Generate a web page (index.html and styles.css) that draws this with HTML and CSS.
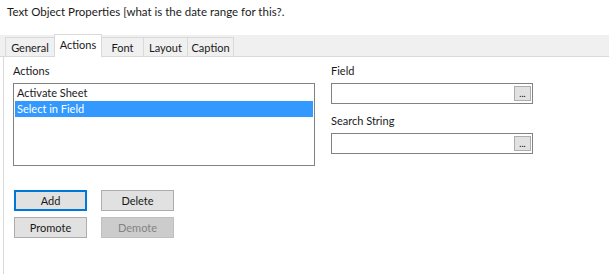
FILE: index.html
```html
<!DOCTYPE html>
<html>
<head>
<meta charset="utf-8">
<link rel="stylesheet" href="styles.css">
</head>
<body>
<div class="title">Text Object Properties [what is the date range for this?.</div>
<div class="tabstrip">
  <div class="tab t-general">General</div>
  <div class="tab t-actions active">Actions</div>
  <div class="tab t-font">Font</div>
  <div class="tab t-layout">Layout</div>
  <div class="tab t-caption">Caption</div>
</div>
<div class="panel">
  <div class="cols">
    <div class="left">
      <div class="label">Actions</div>
      <div class="listbox">
        <div class="item">Activate Sheet</div>
        <div class="item selected">Select in Field</div>
      </div>
    </div>
    <div class="right">
      <div class="label">Field</div>
      <div class="input"><span class="dots">...</span></div>
      <div class="label label2">Search String</div>
      <div class="input"><span class="dots">...</span></div>
    </div>
  </div>
  <div class="buttons">
    <div class="btnrow">
      <div class="btn focus">Add</div>
      <div class="btn">Delete</div>
    </div>
    <div class="btnrow">
      <div class="btn">Promote</div>
      <div class="btn disabled">Demote</div>
    </div>
  </div>
</div>
</body>
</html>
```
FILE: styles.css
```css
html, body {
  margin: 0;
  padding: 0;
  background: #ffffff;
  width: 609px;
  height: 274px;
  overflow: hidden;
  font-family: Lato, "Liberation Sans", sans-serif;
  font-size: 11px;
  color: #1a1a1a;
}
.title {
  height: 35px;
  box-sizing: border-box;
  padding: 4px 0 0 7px;
  font-size: 11.5px;
  line-height: 16px;
}
.tabstrip {
  height: 22px;
  background: #f0f0f0;
  display: flex;
  align-items: flex-end;
  padding-left: 5px;
  box-sizing: border-box;
  border-bottom: 1px solid #d9d9d9;
}
.tab {
  height: 19px;
  box-sizing: border-box;
  border: 1px solid #d9d9d9;
  border-bottom: none;
  margin-right: -1px;
  padding-top: 1px;
  line-height: 17px;
  text-align: center;
  background: #f0f0f0;
}
.t-general { width: 50px; }
.t-actions { width: 48px; }
.t-font { width: 43px; }
.t-layout { width: 45px; }
.t-caption { width: 47px; }
.tab.active {
  height: 23px;
  margin-bottom: -1px;
  background: #fff;
  padding-top: 0;
  line-height: 19px;
  position: relative;
}
.panel {
  margin-left: 3px;
  border-left: 1px solid #d9d9d9;
  height: 217px;
  box-sizing: border-box;
  padding: 6px 0 0 9px;
}
.cols {
  display: flex;
  gap: 16px;
}
.left {
  width: 302px;
}
.right {
  width: 202px;
}
.label {
  height: 20px;
  line-height: 15px;
}
.label2 {
  margin-top: 9px;
}
.listbox {
  height: 83px;
  box-sizing: border-box;
  border: 1px solid #828282;
  padding: 1px;
}
.item {
  height: 16px;
  line-height: 16px;
  padding-left: 2px;
}
.item.selected {
  background: #3399ff;
  color: #fff;
}
.input {
  height: 21px;
  box-sizing: border-box;
  border: 1px solid #828282;
  display: flex;
  justify-content: flex-end;
  align-items: center;
  padding-right: 1px;
}
.dots {
  width: 17px;
  height: 15px;
  box-sizing: border-box;
  background: #e1e1e1;
  border: 1px solid #adadad;
  font-size: 9px;
  line-height: 13px;
  text-align: center;
  color: #000;
}
.buttons {
  margin-top: 24px;
  margin-left: 1px;
  display: flex;
  flex-direction: column;
  gap: 6px;
}
.btnrow {
  display: flex;
  gap: 14px;
}
.btn {
  width: 73px;
  height: 21px;
  box-sizing: border-box;
  border: 1px solid #adadad;
  background: #e1e1e1;
  text-align: center;
  line-height: 19px;
}
.btn.focus {
  border: 2px solid #0078d7;
  line-height: 17px;
}
.btn.disabled {
  background: #cccccc;
  border-color: #bfbfbf;
  color: #838383;
}
```
